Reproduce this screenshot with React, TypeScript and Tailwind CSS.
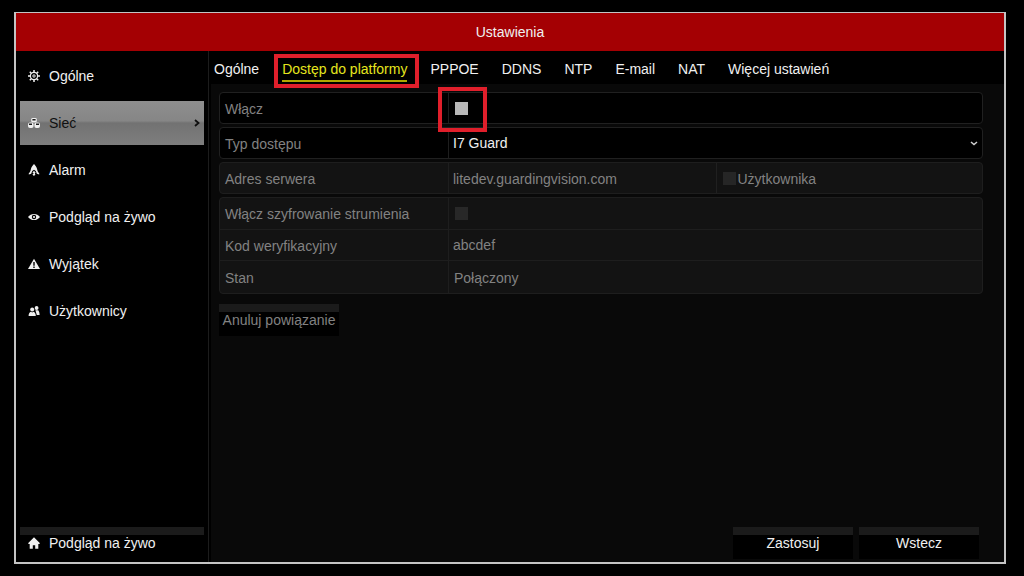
import { useState } from 'react'
import type { ReactNode } from 'react'

const tabs = ['Ogólne', 'Dostęp do platformy', 'PPPOE', 'DDNS', 'NTP', 'E-mail', 'NAT', 'Więcej ustawień']

function GearIcon() {
    return (
        <svg viewBox="0 0 12 12" className="h-3 w-3" fill="none" stroke="currentColor">
            <circle cx="6" cy="6" r="3.6" strokeWidth="1.2" />
            <circle cx="6" cy="6" r="1.2" strokeWidth="1" />
            <path d="M6 0v2.4M6 9.6V12M0 6h2.4M9.6 6H12M1.8 1.8l1.7 1.7M8.5 8.5l1.7 1.7M10.2 1.8L8.5 3.5M3.5 8.5l-1.7 1.7" strokeWidth="1.5" />
        </svg>
    )
}

function NetworkIcon() {
    return (
        <svg viewBox="0 0 12 12" className="h-3 w-3" fill="currentColor">
            <rect x="3.2" y="1" width="5.6" height="4.4" rx="1.4" />
            <rect x="0" y="5.6" width="5.6" height="5.4" rx="2" />
            <rect x="6.4" y="5.6" width="5.6" height="5.4" rx="2" />
            <path d="M4.4 2h3.2v1.4H4.4zM1 6.4h3v1.6H1zM8 6.4h3v1.6H8z" fill="#1a1a1a" />
        </svg>
    )
}

function AlarmIcon() {
    return (
        <svg viewBox="0 0 12 12" className="h-3 w-3" fill="currentColor">
            <path d="M6 0c1 1 2.8 3 3.2 5.400.2 1.600.8 2.600 2 3.800v1.400L8.800 9.800 7.800 7 6 5.800 4.200 7l-1 2.800-2.400.8V9.200c1.200-1.200 1.800-2.200 2-3.800C3.200 3 5 1 6 0z" />
            <path d="M4.400 8.200L6 7l1.600 1.200-.8 1.200.6 1L6 12l-1.600-1.600 1.300-.8z" />
        </svg>
    )
}

function EyeIcon() {
    return (
        <svg viewBox="0 0 12 12" className="h-3 w-3" fill="currentColor">
            <path d="M0 6c1.600-2.100 3.600-3.100 6-3.100S10.400 3.900 12 6c-1.600 2.100-3.600 3.100-6 3.100S1.600 8.100 0 6z" />
            <circle cx="6" cy="6" r="2.200" fill="#000" />
            <circle cx="6" cy="6" r="1.100" />
        </svg>
    )
}

function WarningIcon() {
    return (
        <svg viewBox="0 0 12 12" className="h-3 w-3" fill="currentColor">
            <path d="M6 .8L12 11H0z" />
            <path d="M5.300 4h1.400v3.800H5.300zM5.300 8.600h1.400V10H5.300z" fill="#000" />
        </svg>
    )
}

function UsersIcon() {
    return (
        <svg viewBox="0 0 12 12" className="h-3 w-3" fill="currentColor">
            <circle cx="8.600" cy="3" r="1.900" />
            <path d="M7.400 5.200h2.800c1 1.200 1.400 2.800 1.400 4.800H8.800z" />
            <circle cx="4.200" cy="4.400" r="2" />
            <path d="M.6 11c0-2.200.8-3.600 2.400-4.200l1.200.8 1.200-.8C7 7.400 7.800 8.800 7.800 11z" />
        </svg>
    )
}

function HomeIcon() {
    return (
        <svg viewBox="0 0 12 12" className="h-3 w-3" fill="currentColor">
            <path d="M6 .2l6 6-.8.8h-.9v4.800H7.200V8.200H4.800v3.600H1.700V7H.8L0 6.200z" />
        </svg>
    )
}

const menu = [
    { label: 'Ogólne', icon: <GearIcon /> },
    { label: 'Sieć', icon: <NetworkIcon /> },
    { label: 'Alarm', icon: <AlarmIcon /> },
    { label: 'Podgląd na żywo', icon: <EyeIcon /> },
    { label: 'Wyjątek', icon: <WarningIcon /> },
    { label: 'Użytkownicy', icon: <UsersIcon /> },
]

function Row({ label, htmlFor, children }: { label: string; htmlFor: string; children: ReactNode }) {
    return (
        <div className="flex h-full items-stretch">
            <label htmlFor={htmlFor} className="flex w-[229px] shrink-0 items-center border-r border-[#1e1e1e] pt-[2px] pl-[5px]">
                {label}
            </label>
            <div className="flex min-w-0 flex-1 items-center">{children}</div>
        </div>
    )
}

const checkbox = 'h-[13px] w-[13px] shrink-0 appearance-none'
const textInput = 'h-full min-w-0 flex-1 bg-transparent pt-px pl-1 outline-none'
const stripButton = 'h-8 bg-[linear-gradient(#1b1b1b_8px,#000_8px)]'

export default function App() {
    const [section, setSection] = useState('Sieć')
    const [tab, setTab] = useState('Dostęp do platformy')

    return (
        <div className="flex min-h-screen flex-col bg-black pt-3 pr-[18px] pb-3 pl-[14px] font-['Liberation_Sans',Arial,sans-serif] text-sm text-[#f0f0f0]">
            <div className="flex flex-1 flex-col border-2 border-t border-[#c4c4c4]">
                <header className="flex h-[38px] items-center justify-center bg-[#a40003]">
                    <h1>Ustawienia</h1>
                </header>

                <div className="flex flex-1">
                    <aside className="flex w-[193px] shrink-0 flex-col justify-between border-r border-[#1c1c1c] pt-[3px] pr-1 pb-[3px] pl-1">
                        <nav className="flex flex-col gap-[3px]">
                            {menu.map((item) => (
                                <button
                                    key={item.label}
                                    onClick={() => setSection(item.label)}
                                    className={
                                        item.label === section
                                            ? 'flex h-11 items-center gap-[9px] bg-[linear-gradient(#8e8e8e,#868686_45%,#727272_50%,#7e7e7e)] px-2'
                                            : 'flex h-11 items-center gap-[9px] px-2'
                                    }
                                >
                                    {item.icon}
                                    <span className={item.label === section ? 'text-[#101010]' : ''}>{item.label}</span>
                                    {item.label === section && (
                                        <svg viewBox="0 0 6 8" className="-mr-1 ml-auto h-2 w-[6px]" fill="none" stroke="#101010" strokeWidth="1.800">
                                            <path d="M1 1l3.500 3L1 7" />
                                        </svg>
                                    )}
                                </button>
                            ))}
                        </nav>
                        <button className={`flex items-center gap-[9px] px-2 ${stripButton}`}>
                            <HomeIcon />
                            Podgląd na żywo
                        </button>
                    </aside>

                    <main className="flex min-w-0 flex-1 flex-col pl-[2px]">
                        <nav className="flex h-[33px] items-center gap-[23px] pt-1 pl-[3px] whitespace-nowrap">
                            {tabs.map((name) => (
                                <button
                                    key={name}
                                    onClick={() => setTab(name)}
                                    className={
                                        name === tab
                                            ? 'relative h-6 border-b-2 border-[#b0a800] text-[#e6e61e]'
                                            : 'h-6 border-b-2 border-transparent'
                                    }
                                >
                                    {name}
                                    {name === tab && (
                                        <span className="pointer-events-none absolute -top-1 -right-3 -bottom-2 -left-2 border-4 border-[#e01f2b]" />
                                    )}
                                </button>
                            ))}
                        </nav>

                        <div className="flex flex-1 flex-col bg-[#090909] pt-2 pr-[21px] pb-[3px] pl-2 text-[#828282]">
                            <form className="flex flex-col gap-[3px]" onSubmit={(e) => e.preventDefault()}>
                                <div className="h-8 rounded-sm border border-[#202020] bg-black">
                                    <Row label="Włącz" htmlFor="enable">
                                        <div className="relative ml-[6px] flex">
                                            <input id="enable" type="checkbox" className={`${checkbox} bg-[#b9b9b9]`} />
                                            <span className="pointer-events-none absolute -top-[15px] -right-[19px] -bottom-[17px] -left-[17px] border-4 border-[#e01f2b]" />
                                        </div>
                                    </Row>
                                </div>

                                <div className="h-8 rounded-sm border border-[#202020] bg-black">
                                    <Row label="Typ dostępu" htmlFor="access">
                                        <div className="relative flex h-full flex-1 items-center">
                                            <select id="access" className="h-full w-full appearance-none bg-transparent pl-1 text-[#f0f0f0] outline-none">
                                                <option>I7 Guard</option>
                                            </select>
                                            <svg viewBox="0 0 8 5" className="pointer-events-none absolute right-1 h-[5px] w-2" fill="none" stroke="#d0d0d0" strokeWidth="1.500">
                                                <path d="M1 1l3 2.500L7 1" />
                                            </svg>
                                        </div>
                                    </Row>
                                </div>

                                <div className="h-8 rounded-sm border border-[#1e1e1e] bg-[#131313]">
                                    <Row label="Adres serwera" htmlFor="server">
                                        <input id="server" type="text" defaultValue="litedev.guardingvision.com" className={textInput} />
                                        <label className="flex h-full w-1/2 items-center gap-[2px] border-l border-[#202020] pl-[6px]">
                                            <input type="checkbox" className={`${checkbox} bg-[#262626]`} />
                                            <span className="pt-[2px]">Użytkownika</span>
                                        </label>
                                    </Row>
                                </div>

                                <div className="grid h-[97px] grid-rows-3 divide-y divide-[#1e1e1e] rounded-sm border border-[#1e1e1e] bg-[#131313]">
                                    <Row label="Włącz szyfrowanie strumienia" htmlFor="encrypt">
                                        <input id="encrypt" type="checkbox" className={`${checkbox} ml-[6px] bg-[#282828]`} />
                                    </Row>
                                    <Row label="Kod weryfikacyjny" htmlFor="code">
                                        <input id="code" type="text" defaultValue="abcdef" className={textInput} />
                                    </Row>
                                    <Row label="Stan" htmlFor="status">
                                        <output id="status" className="pt-[2px] pl-[5px]">Połączony</output>
                                    </Row>
                                </div>
                            </form>

                            <button className={`mt-[10px] w-[120px] self-start ${stripButton}`}>Anuluj powiązanie</button>

                            <div className="mt-auto flex justify-end gap-[6px] pr-1 text-[#f0f0f0]">
                                <button className={`w-[120px] ${stripButton}`}>Zastosuj</button>
                                <button className={`w-[120px] ${stripButton}`}>Wstecz</button>
                            </div>
                        </div>
                    </main>
                </div>
            </div>
        </div>
    )
}
